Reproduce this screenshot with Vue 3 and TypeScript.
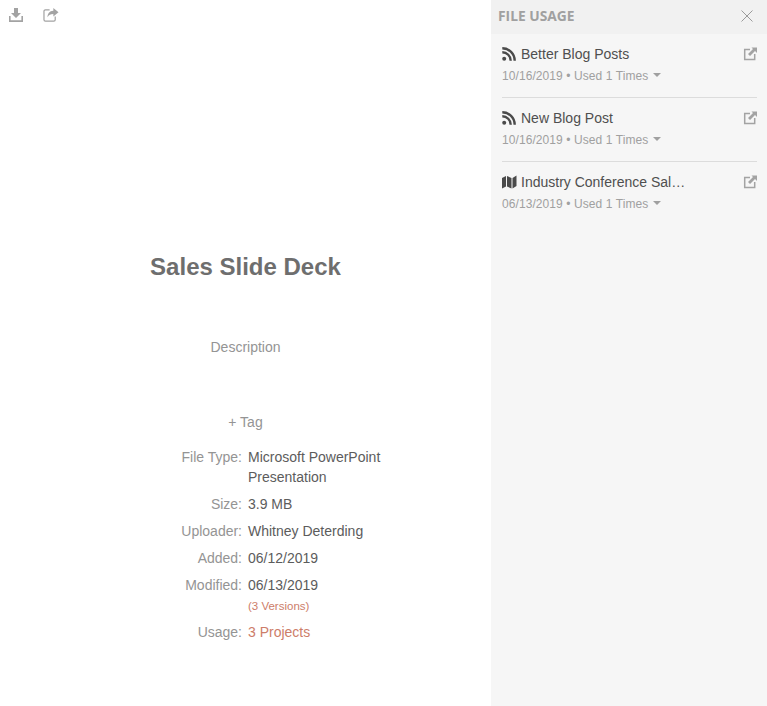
<script setup lang="ts">
interface Usage { title: string; meta: string; icon: 'rss' | 'map' }
const usages: Usage[] = [
  { title: 'Better Blog Posts', meta: '10/16/2019 • Used 1 Times', icon: 'rss' },
  { title: 'New Blog Post', meta: '10/16/2019 • Used 1 Times', icon: 'rss' },
  { title: 'Industry Conference Sal…', meta: '06/13/2019 • Used 1 Times', icon: 'map' }
]
const rows = [
  { label: 'Size:', value: '3.9 MB' },
  { label: 'Uploader:', value: 'Whitney Deterding' },
  { label: 'Added:', value: '06/12/2019' }
]
</script>

<template>
  <div class="page">
    <main class="main">
      <div class="tools">
        <svg width="16" height="16" viewBox="0 0 16 16" class="tool"><path d="M6 1h4v5h3L8 11 3 6h3z" fill="#a3a3a3"/><path d="M1 9v6h14V9h-1.600v4.200H2.600V9z" fill="#a3a3a3"/></svg>
        <svg width="16" height="15" viewBox="0 0 17 16" class="tool"><path d="M7 3H2.500C1.700 3 1 3.700 1 4.500v9c0 .8.700 1.500 1.500 1.500h9c.8 0 1.500-.7 1.500-1.500V10" fill="none" stroke="#a3a3a3" stroke-width="1.300"/><path d="M11 1l5.500 4.500L11 10V7.400C8 7.400 6 8.200 4.800 11c0-4 2-6.800 6.200-7z" fill="#a3a3a3"/></svg>
      </div>
      <h1 class="title">Sales Slide Deck</h1>
      <div class="desc">Description</div>
      <div class="tag">+ Tag</div>
      <div class="info">
        <div class="row"><span class="label">File Type:</span><span class="value">Microsoft PowerPoint Presentation</span></div>
        <div v-for="r in rows" :key="r.label" class="row"><span class="label">{{ r.label }}</span><span class="value">{{ r.value }}</span></div>
        <div class="row"><span class="label">Modified:</span><span class="value">06/13/2019<small class="versions">(3 Versions)</small></span></div>
        <div class="row"><span class="label">Usage:</span><span class="value link">3 Projects</span></div>
      </div>
    </main>
    <aside class="side">
      <header class="head">
        <span class="head-title">FILE USAGE</span>
        <svg width="12" height="12" viewBox="0 0 12 12"><path d="M.5.500l11 11M11.500.500l-11 11" stroke="#9a9a9a" stroke-width="1" fill="none"/></svg>
      </header>
      <div class="list">
        <div v-for="u in usages" :key="u.title" class="item">
          <div class="item-top">
            <svg v-if="u.icon === 'rss'" class="kind" width="15" height="14" viewBox="0 0 15 14"><circle cx="2.200" cy="11.800" r="2" fill="#4a4a4a"/><path d="M.3 5.300a8.400 8.400 0 0 1 8.400 8.400" fill="none" stroke="#4a4a4a" stroke-width="2.400"/><path d="M.3 1.300a12.400 12.400 0 0 1 12.400 12.400" fill="none" stroke="#4a4a4a" stroke-width="2.400"/></svg>
            <svg v-else class="kind" width="15" height="14" viewBox="0 0 15 14"><path d="M0 3l4-2v10.500l-4 2zM5 1l4.500 2v10.500L5 11.500zM10.500 3L14.500.5V11l-4 2.500z" fill="#4a4a4a"/></svg>
            <span class="item-title">{{ u.title }}</span>
            <svg class="ext" width="14" height="14" viewBox="0 0 14 14"><path d="M7 2.500H1.700v10h10V7" fill="none" stroke="#a3a3a3" stroke-width="1.500"/><path d="M8.500.500H14V6l-2-2-5 5-2-2 5-5z" fill="#a3a3a3"/></svg>
          </div>
          <div class="meta">{{ u.meta }}<i class="caret"></i></div>
        </div>
      </div>
    </aside>
  </div>
</template>

<style>
html, body { margin: 0; background: #fff; }
</style>

<style scoped>
.page { display: flex; width: 767px; height: 706px; overflow: hidden; font-family: "Liberation Sans", Arial, sans-serif; font-size: 14px; color: #4f4f4f; }
.main { width: 491px; flex: none; box-sizing: border-box; }
.tools { display: flex; gap: 19px; padding: 7px 0 0 8px; height: 23px; box-sizing: border-box; }
.tool { display: block; }
.title { margin: 229px 0 0; height: 30px; line-height: 30px; text-align: center; font-size: 24px; font-weight: 700; color: #6e6e6e; }
.desc { margin-top: 55px; text-align: center; line-height: 20px; color: #949494; }
.tag { margin-top: 55px; text-align: center; line-height: 20px; color: #949494; }
.info { margin-top: 15px; display: flex; flex-direction: column; gap: 7px; }
.row { display: flex; line-height: 20px; }
.label { width: 242px; flex: none; text-align: right; color: #949494; }
.value { width: 150px; margin-left: 6px; color: #5c5c5c; }
.versions { display: block; font-size: 11.500px; line-height: 14px; margin: 4px 0 2px; color: #cd7d69; }
.link { color: #cd7d69; }
.side { flex: 1; background: #f6f6f6; }
.head { height: 34px; background: #f1f1f1; display: flex; align-items: center; justify-content: space-between; padding: 0 14px 3px 7px; box-sizing: border-box; }
.head svg { margin-top: 1px; }
.head-title { font-family: "Open Sans", sans-serif; font-size: 13.800px; font-weight: 700; color: #a0a0a0; }
.list { padding: 0 10px 0 11px; }
.item { height: 64px; padding-top: 10px; box-sizing: border-box; border-bottom: 1px solid #dcdcdc; }
.item:last-child { border-bottom: 0; }
.item-top { display: flex; align-items: center; height: 20px; }
.kind { flex: none; margin-right: 4px; }
.item-title { white-space: nowrap; color: #4f4f4f; }
.ext { margin-left: auto; }
.meta { margin-top: 4px; font-size: 12px; letter-spacing: .08px; line-height: 16px; color: #a0a0a0; }
.caret { display: inline-block; margin-left: 5px; vertical-align: 3px; border: 4px solid transparent; border-top-color: #a0a0a0; border-bottom: 0; }
</style>
